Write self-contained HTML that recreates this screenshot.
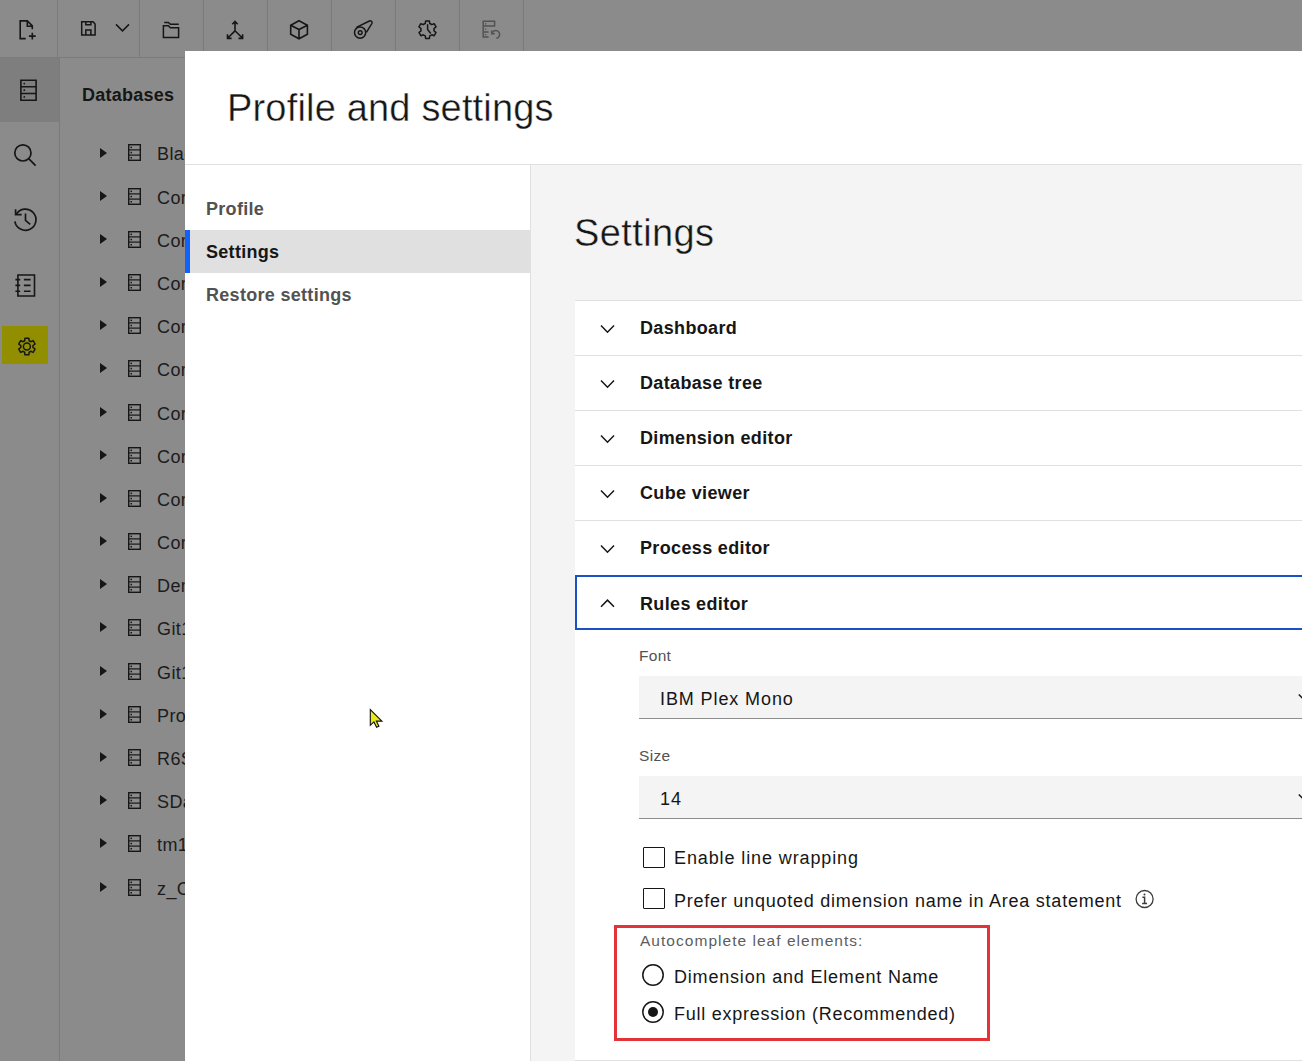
<!DOCTYPE html>
<html><head><meta charset="utf-8">
<style>
*{box-sizing:border-box;margin:0;padding:0}
html,body{width:1302px;height:1061px;overflow:hidden;background:#8b8b8b;font-family:"Liberation Sans",sans-serif;color:#161616}
.abs{position:absolute}
svg{position:absolute;display:block}
/* toolbar */
#toolbar{left:0;top:0;width:1302px;height:58px;background:#8b8b8b;border-bottom:1px solid #7b7b7b}
.tsep{top:0;width:1px;height:58px;background:#7b7b7b}
/* rail */
#rail{left:0;top:58px;width:60px;height:1003px;border-right:1px solid #7b7b7b}
#railsel{left:0;top:58px;width:59px;height:64px;background:#7e7e7e}
#hl{left:2px;top:326px;width:46px;height:38px;background:#918f00}
/* db panel */
#dbh{left:82px;top:84px;font-size:18px;font-weight:700;color:#161616;line-height:22px;letter-spacing:0.25px}
.row{left:0;width:185px;height:43px}
.tri{left:100px;width:0;height:0;border-top:5.2px solid transparent;border-bottom:5.2px solid transparent;border-left:7.4px solid #161616}
.rtx{left:157px;font-size:18px;line-height:20px;color:#1c1c1c;white-space:nowrap;letter-spacing:0.4px}
/* modal */
#modal{left:185px;top:51px;width:1117px;height:1010px;background:#fff;overflow:hidden}
#title{left:42px;top:35px;font-size:38px;line-height:44px;letter-spacing:0.18px;-webkit-text-stroke:0.4px #fff;white-space:nowrap;color:#161616}
#hdrline{left:0;top:113px;width:1117px;height:1px;background:#e0e0e0}
#nav{left:0;top:114px;width:346px;height:900px;border-right:1px solid #e0e0e0}
.nav{left:0;width:345px;height:43px;font-size:18px;font-weight:700;color:#525252;padding-left:21px;line-height:45px;letter-spacing:0.3px;white-space:nowrap}
#right{left:346px;top:114px;width:771px;height:900px;background:#f4f4f4}
#sh{left:43px;top:46px;font-size:38px;line-height:44px;letter-spacing:0.4px;-webkit-text-stroke:0.4px #f4f4f4;white-space:nowrap}
#acc{left:44px;top:135px;width:800px;height:800px}
.ai{left:0;width:800px;height:55px;border-top:1px solid #e0e0e0;background:#fff}
.at{left:65px;top:0;font-size:18px;font-weight:700;line-height:55px;letter-spacing:0.35px;white-space:nowrap;color:#161616}
.lbl{font-size:15.5px;line-height:18px;color:#525252;white-space:nowrap;letter-spacing:0.3px}
.lbl2{font-size:15.5px;line-height:18px;color:#5d5d5d;white-space:nowrap;letter-spacing:1.03px}
.sel{width:800px;height:43px;background:#f4f4f4;border-bottom:1px solid #8d8d8d;font-size:18px;line-height:46px;padding-left:21px;white-space:nowrap;letter-spacing:0.9px}
.cb{width:22px;height:21px;border:1.5px solid #161616;border-radius:1px;background:#fff}
.txt{font-size:18px;line-height:22px;white-space:nowrap;letter-spacing:0.65px;color:#161616}
</style></head>
<body>
<!-- TOOLBAR -->
<div id="toolbar" class="abs"></div>
<div class="abs tsep" style="left:57px"></div>
<div class="abs tsep" style="left:139px"></div>
<div class="abs tsep" style="left:203px"></div>
<div class="abs tsep" style="left:267px"></div>
<div class="abs tsep" style="left:331px"></div>
<div class="abs tsep" style="left:395px"></div>
<div class="abs tsep" style="left:459px"></div>
<div class="abs tsep" style="left:523px"></div>

<!-- RAIL -->
<div id="railsel" class="abs"></div>
<div id="rail" class="abs"></div>
<div id="hl" class="abs"></div>

<svg style="left:0;top:0" width="523" height="370" viewBox="0 0 523 370" fill="none" stroke="#161616" stroke-width="1.6" stroke-linejoin="miter">
<!-- new doc -->
<path d="M25.7 38.6H20.2V20.9H27.3L32.3 25.9V29.2M27.3 20.9V26.3H32.3"/>
<path d="M28.9 36.1H35.7M32.3 32.8V39.4"/>
<!-- save -->
<path d="M81.7 21.8H93L95.1 24.1V35H81.7Z M85.8 21.8V24.8H90.9V21.8 M85.8 35V29.9H90.9V35" stroke-width="1.5"/>
<path d="M116 24.4L122.5 30.9L129 24.4" stroke-width="1.5"/>
<!-- folder -->
<path d="M164.2 22.4H168.3L170.4 24.3H178.8" stroke-width="1.5"/>
<path d="M163.4 25.8H168.3L170.4 27.8H178.6V37.4H163.4Z" stroke-width="1.5"/>
<!-- axes -->
<path d="M235 21.6V30.8L227.6 38.2M235 30.8L242.6 38.2 M232.3 24.2L235 21.5L237.7 24.2 M227.5 34.2V38.4H231.6 M242.6 34.2V38.4H238.5" stroke-width="1.6"/>
<!-- cube -->
<path d="M299 20.7L307.4 25.2V34.2L299 38.8L290.7 34.2V25.2Z M290.7 25.2L299 29.5L307.4 25.2 M299 29.5V38.8" stroke-width="1.6"/>
<!-- process -->
<circle cx="360.1" cy="32.6" r="5.6" stroke-width="1.5"/>
<circle cx="360.2" cy="32.6" r="1.9" stroke-width="1.4"/>
<path d="M356.4 27.3L369.4 21A1.9 1.9 0 0 1 372 23.3L366.4 32.4" stroke-width="1.5"/>
<!-- gear clock -->
<path d="M424.20 23.98 L425.26 23.49 L425.63 20.90 L429.37 20.90 L429.74 23.49 L430.80 23.98 L431.76 24.66 L434.19 23.68 L436.06 26.92 L434.00 28.53 L434.10 29.70 L434.00 30.87 L436.06 32.48 L434.19 35.72 L431.76 34.74 L430.80 35.42 L429.74 35.91 L429.37 38.50 L425.63 38.50 L425.26 35.91 L424.20 35.42 L423.24 34.74 L420.81 35.72 L418.94 32.48 L421.00 30.87 L420.90 29.70 L421.00 28.53 L418.94 26.92 L420.81 23.68 L423.24 24.66Z" stroke-width="1.5" stroke-linejoin="round"/>
<path d="M427.6 24.2V29.6L430.8 33.4" stroke-width="1.5"/>
<!-- disabled restore -->
<g stroke="#525252" stroke-width="1.5">
<path d="M483.2 21.2H494.6V26.1H483.2Z M483.2 26.1V37.1H488.6 M483.2 31.9H488.6"/>
<path d="M492.3 32.6A3.9 3.9 0 1 1 496.4 38.3" />
<path d="M491.7 30.6V33.7H494.7"/>
</g>
<g fill="#525252" stroke="none"><rect x="485" y="23.2" width="1.3" height="1.3"/><rect x="485" y="28.5" width="1.3" height="1.3"/><rect x="485" y="34" width="1.3" height="1.3"/></g>
<!-- rail db -->
<path d="M20.9 80.2H36.1V100.3H20.9Z M20.9 86.8H36.1 M20.9 93.5H36.1" stroke-width="1.6"/>
<g fill="#161616" stroke="none"><circle cx="24.3" cy="83.6" r="0.9"/><circle cx="24.3" cy="90.2" r="0.9"/><circle cx="24.3" cy="96.9" r="0.9"/></g>
<!-- search -->
<circle cx="22.9" cy="152.9" r="8.1" stroke-width="1.7"/>
<path d="M28.7 158.7L35.6 165.6" stroke-width="1.7"/>
<!-- history -->
<path d="M16.2 214.4A10.6 10.6 0 1 1 14.9 221.3" stroke-width="1.7"/>
<path d="M15.6 209.2V214.6H21.7" stroke-width="1.7"/>
<path d="M25.5 213.5V220.4L30.2 224.3" stroke-width="1.7"/>
<!-- notebook -->
<path d="M17.9 275H34.5V296H17.9Z M23.9 279.6H30.6 M23.9 285.4H30.6 M23.9 291.3H30.6 M15.4 279.6H20.2 M15.4 285.4H20.2 M15.4 291.3H20.2" stroke-width="1.6"/>
<!-- gear -->
<path d="M23.85 341.22 L24.65 340.83 L24.94 338.13 L28.86 338.13 L29.15 340.83 L29.95 341.22 L30.69 341.72 L33.17 340.61 L35.13 344.01 L32.93 345.61 L33.00 346.50 L32.93 347.39 L35.13 348.99 L33.17 352.39 L30.69 351.28 L29.95 351.78 L29.15 352.17 L28.86 354.87 L24.94 354.87 L24.65 352.17 L23.85 351.78 L23.11 351.28 L20.63 352.39 L18.67 348.99 L20.87 347.39 L20.80 346.50 L20.87 345.61 L18.67 344.01 L20.63 340.61 L23.11 341.72Z" stroke-width="1.5" stroke-linejoin="round"/>
<circle cx="26.9" cy="346.5" r="3.5" stroke-width="1.5"/>
</svg>
<!-- DB PANEL -->
<div id="dbh" class="abs">Databases</div>
<div id="tree"><div class="abs tri" style="top:148px"></div><svg class="dbi" style="left:128px;top:144px" width="13" height="17" viewBox="0 0 13 17"><rect x="0.7" y="0.7" width="11.6" height="15.6" fill="none" stroke="#161616" stroke-width="1.4"/><line x1="0.5" y1="5.9" x2="12.5" y2="5.9" stroke="#161616" stroke-width="1.2"/><line x1="0.5" y1="11.1" x2="12.5" y2="11.1" stroke="#161616" stroke-width="1.2"/><rect x="2.5" y="2.6" width="1.5" height="1.5" fill="#161616"/><rect x="2.5" y="7.8" width="1.5" height="1.5" fill="#161616"/><rect x="2.5" y="13" width="1.5" height="1.5" fill="#161616"/></svg><div class="abs rtx" style="top:143.5px">BlackRock</div><div class="abs tri" style="top:191px"></div><svg class="dbi" style="left:128px;top:188px" width="13" height="17" viewBox="0 0 13 17"><rect x="0.7" y="0.7" width="11.6" height="15.6" fill="none" stroke="#161616" stroke-width="1.4"/><line x1="0.5" y1="5.9" x2="12.5" y2="5.9" stroke="#161616" stroke-width="1.2"/><line x1="0.5" y1="11.1" x2="12.5" y2="11.1" stroke="#161616" stroke-width="1.2"/><rect x="2.5" y="2.6" width="1.5" height="1.5" fill="#161616"/><rect x="2.5" y="7.8" width="1.5" height="1.5" fill="#161616"/><rect x="2.5" y="13" width="1.5" height="1.5" fill="#161616"/></svg><div class="abs rtx" style="top:187.5px">Corp_Sales</div><div class="abs tri" style="top:234px"></div><svg class="dbi" style="left:128px;top:231px" width="13" height="17" viewBox="0 0 13 17"><rect x="0.7" y="0.7" width="11.6" height="15.6" fill="none" stroke="#161616" stroke-width="1.4"/><line x1="0.5" y1="5.9" x2="12.5" y2="5.9" stroke="#161616" stroke-width="1.2"/><line x1="0.5" y1="11.1" x2="12.5" y2="11.1" stroke="#161616" stroke-width="1.2"/><rect x="2.5" y="2.6" width="1.5" height="1.5" fill="#161616"/><rect x="2.5" y="7.8" width="1.5" height="1.5" fill="#161616"/><rect x="2.5" y="13" width="1.5" height="1.5" fill="#161616"/></svg><div class="abs rtx" style="top:230.5px">Corporate_Fin</div><div class="abs tri" style="top:277px"></div><svg class="dbi" style="left:128px;top:274px" width="13" height="17" viewBox="0 0 13 17"><rect x="0.7" y="0.7" width="11.6" height="15.6" fill="none" stroke="#161616" stroke-width="1.4"/><line x1="0.5" y1="5.9" x2="12.5" y2="5.9" stroke="#161616" stroke-width="1.2"/><line x1="0.5" y1="11.1" x2="12.5" y2="11.1" stroke="#161616" stroke-width="1.2"/><rect x="2.5" y="2.6" width="1.5" height="1.5" fill="#161616"/><rect x="2.5" y="7.8" width="1.5" height="1.5" fill="#161616"/><rect x="2.5" y="13" width="1.5" height="1.5" fill="#161616"/></svg><div class="abs rtx" style="top:273.5px">Corp_HR</div><div class="abs tri" style="top:320px"></div><svg class="dbi" style="left:128px;top:317px" width="13" height="17" viewBox="0 0 13 17"><rect x="0.7" y="0.7" width="11.6" height="15.6" fill="none" stroke="#161616" stroke-width="1.4"/><line x1="0.5" y1="5.9" x2="12.5" y2="5.9" stroke="#161616" stroke-width="1.2"/><line x1="0.5" y1="11.1" x2="12.5" y2="11.1" stroke="#161616" stroke-width="1.2"/><rect x="2.5" y="2.6" width="1.5" height="1.5" fill="#161616"/><rect x="2.5" y="7.8" width="1.5" height="1.5" fill="#161616"/><rect x="2.5" y="13" width="1.5" height="1.5" fill="#161616"/></svg><div class="abs rtx" style="top:316.5px">Corp_Sales</div><div class="abs tri" style="top:363px"></div><svg class="dbi" style="left:128px;top:360px" width="13" height="17" viewBox="0 0 13 17"><rect x="0.7" y="0.7" width="11.6" height="15.6" fill="none" stroke="#161616" stroke-width="1.4"/><line x1="0.5" y1="5.9" x2="12.5" y2="5.9" stroke="#161616" stroke-width="1.2"/><line x1="0.5" y1="11.1" x2="12.5" y2="11.1" stroke="#161616" stroke-width="1.2"/><rect x="2.5" y="2.6" width="1.5" height="1.5" fill="#161616"/><rect x="2.5" y="7.8" width="1.5" height="1.5" fill="#161616"/><rect x="2.5" y="13" width="1.5" height="1.5" fill="#161616"/></svg><div class="abs rtx" style="top:359.5px">Corp_HR</div><div class="abs tri" style="top:407px"></div><svg class="dbi" style="left:128px;top:404px" width="13" height="17" viewBox="0 0 13 17"><rect x="0.7" y="0.7" width="11.6" height="15.6" fill="none" stroke="#161616" stroke-width="1.4"/><line x1="0.5" y1="5.9" x2="12.5" y2="5.9" stroke="#161616" stroke-width="1.2"/><line x1="0.5" y1="11.1" x2="12.5" y2="11.1" stroke="#161616" stroke-width="1.2"/><rect x="2.5" y="2.6" width="1.5" height="1.5" fill="#161616"/><rect x="2.5" y="7.8" width="1.5" height="1.5" fill="#161616"/><rect x="2.5" y="13" width="1.5" height="1.5" fill="#161616"/></svg><div class="abs rtx" style="top:403.5px">Corp_IT</div><div class="abs tri" style="top:450px"></div><svg class="dbi" style="left:128px;top:447px" width="13" height="17" viewBox="0 0 13 17"><rect x="0.7" y="0.7" width="11.6" height="15.6" fill="none" stroke="#161616" stroke-width="1.4"/><line x1="0.5" y1="5.9" x2="12.5" y2="5.9" stroke="#161616" stroke-width="1.2"/><line x1="0.5" y1="11.1" x2="12.5" y2="11.1" stroke="#161616" stroke-width="1.2"/><rect x="2.5" y="2.6" width="1.5" height="1.5" fill="#161616"/><rect x="2.5" y="7.8" width="1.5" height="1.5" fill="#161616"/><rect x="2.5" y="13" width="1.5" height="1.5" fill="#161616"/></svg><div class="abs rtx" style="top:446.5px">Corp_Ops</div><div class="abs tri" style="top:493px"></div><svg class="dbi" style="left:128px;top:490px" width="13" height="17" viewBox="0 0 13 17"><rect x="0.7" y="0.7" width="11.6" height="15.6" fill="none" stroke="#161616" stroke-width="1.4"/><line x1="0.5" y1="5.9" x2="12.5" y2="5.9" stroke="#161616" stroke-width="1.2"/><line x1="0.5" y1="11.1" x2="12.5" y2="11.1" stroke="#161616" stroke-width="1.2"/><rect x="2.5" y="2.6" width="1.5" height="1.5" fill="#161616"/><rect x="2.5" y="7.8" width="1.5" height="1.5" fill="#161616"/><rect x="2.5" y="13" width="1.5" height="1.5" fill="#161616"/></svg><div class="abs rtx" style="top:489.5px">Corp_Risk</div><div class="abs tri" style="top:536px"></div><svg class="dbi" style="left:128px;top:533px" width="13" height="17" viewBox="0 0 13 17"><rect x="0.7" y="0.7" width="11.6" height="15.6" fill="none" stroke="#161616" stroke-width="1.4"/><line x1="0.5" y1="5.9" x2="12.5" y2="5.9" stroke="#161616" stroke-width="1.2"/><line x1="0.5" y1="11.1" x2="12.5" y2="11.1" stroke="#161616" stroke-width="1.2"/><rect x="2.5" y="2.6" width="1.5" height="1.5" fill="#161616"/><rect x="2.5" y="7.8" width="1.5" height="1.5" fill="#161616"/><rect x="2.5" y="13" width="1.5" height="1.5" fill="#161616"/></svg><div class="abs rtx" style="top:532.5px">Corp_Tax</div><div class="abs tri" style="top:579px"></div><svg class="dbi" style="left:128px;top:576px" width="13" height="17" viewBox="0 0 13 17"><rect x="0.7" y="0.7" width="11.6" height="15.6" fill="none" stroke="#161616" stroke-width="1.4"/><line x1="0.5" y1="5.9" x2="12.5" y2="5.9" stroke="#161616" stroke-width="1.2"/><line x1="0.5" y1="11.1" x2="12.5" y2="11.1" stroke="#161616" stroke-width="1.2"/><rect x="2.5" y="2.6" width="1.5" height="1.5" fill="#161616"/><rect x="2.5" y="7.8" width="1.5" height="1.5" fill="#161616"/><rect x="2.5" y="13" width="1.5" height="1.5" fill="#161616"/></svg><div class="abs rtx" style="top:575.5px">Demo</div><div class="abs tri" style="top:622px"></div><svg class="dbi" style="left:128px;top:619px" width="13" height="17" viewBox="0 0 13 17"><rect x="0.7" y="0.7" width="11.6" height="15.6" fill="none" stroke="#161616" stroke-width="1.4"/><line x1="0.5" y1="5.9" x2="12.5" y2="5.9" stroke="#161616" stroke-width="1.2"/><line x1="0.5" y1="11.1" x2="12.5" y2="11.1" stroke="#161616" stroke-width="1.2"/><rect x="2.5" y="2.6" width="1.5" height="1.5" fill="#161616"/><rect x="2.5" y="7.8" width="1.5" height="1.5" fill="#161616"/><rect x="2.5" y="13" width="1.5" height="1.5" fill="#161616"/></svg><div class="abs rtx" style="top:618.5px">Git1</div><div class="abs tri" style="top:666px"></div><svg class="dbi" style="left:128px;top:663px" width="13" height="17" viewBox="0 0 13 17"><rect x="0.7" y="0.7" width="11.6" height="15.6" fill="none" stroke="#161616" stroke-width="1.4"/><line x1="0.5" y1="5.9" x2="12.5" y2="5.9" stroke="#161616" stroke-width="1.2"/><line x1="0.5" y1="11.1" x2="12.5" y2="11.1" stroke="#161616" stroke-width="1.2"/><rect x="2.5" y="2.6" width="1.5" height="1.5" fill="#161616"/><rect x="2.5" y="7.8" width="1.5" height="1.5" fill="#161616"/><rect x="2.5" y="13" width="1.5" height="1.5" fill="#161616"/></svg><div class="abs rtx" style="top:662.5px">Git1_Test</div><div class="abs tri" style="top:709px"></div><svg class="dbi" style="left:128px;top:706px" width="13" height="17" viewBox="0 0 13 17"><rect x="0.7" y="0.7" width="11.6" height="15.6" fill="none" stroke="#161616" stroke-width="1.4"/><line x1="0.5" y1="5.9" x2="12.5" y2="5.9" stroke="#161616" stroke-width="1.2"/><line x1="0.5" y1="11.1" x2="12.5" y2="11.1" stroke="#161616" stroke-width="1.2"/><rect x="2.5" y="2.6" width="1.5" height="1.5" fill="#161616"/><rect x="2.5" y="7.8" width="1.5" height="1.5" fill="#161616"/><rect x="2.5" y="13" width="1.5" height="1.5" fill="#161616"/></svg><div class="abs rtx" style="top:705.5px">Products</div><div class="abs tri" style="top:752px"></div><svg class="dbi" style="left:128px;top:749px" width="13" height="17" viewBox="0 0 13 17"><rect x="0.7" y="0.7" width="11.6" height="15.6" fill="none" stroke="#161616" stroke-width="1.4"/><line x1="0.5" y1="5.9" x2="12.5" y2="5.9" stroke="#161616" stroke-width="1.2"/><line x1="0.5" y1="11.1" x2="12.5" y2="11.1" stroke="#161616" stroke-width="1.2"/><rect x="2.5" y="2.6" width="1.5" height="1.5" fill="#161616"/><rect x="2.5" y="7.8" width="1.5" height="1.5" fill="#161616"/><rect x="2.5" y="13" width="1.5" height="1.5" fill="#161616"/></svg><div class="abs rtx" style="top:748.5px">R6S</div><div class="abs tri" style="top:795px"></div><svg class="dbi" style="left:128px;top:792px" width="13" height="17" viewBox="0 0 13 17"><rect x="0.7" y="0.7" width="11.6" height="15.6" fill="none" stroke="#161616" stroke-width="1.4"/><line x1="0.5" y1="5.9" x2="12.5" y2="5.9" stroke="#161616" stroke-width="1.2"/><line x1="0.5" y1="11.1" x2="12.5" y2="11.1" stroke="#161616" stroke-width="1.2"/><rect x="2.5" y="2.6" width="1.5" height="1.5" fill="#161616"/><rect x="2.5" y="7.8" width="1.5" height="1.5" fill="#161616"/><rect x="2.5" y="13" width="1.5" height="1.5" fill="#161616"/></svg><div class="abs rtx" style="top:791.5px">SData</div><div class="abs tri" style="top:838px"></div><svg class="dbi" style="left:128px;top:835px" width="13" height="17" viewBox="0 0 13 17"><rect x="0.7" y="0.7" width="11.6" height="15.6" fill="none" stroke="#161616" stroke-width="1.4"/><line x1="0.5" y1="5.9" x2="12.5" y2="5.9" stroke="#161616" stroke-width="1.2"/><line x1="0.5" y1="11.1" x2="12.5" y2="11.1" stroke="#161616" stroke-width="1.2"/><rect x="2.5" y="2.6" width="1.5" height="1.5" fill="#161616"/><rect x="2.5" y="7.8" width="1.5" height="1.5" fill="#161616"/><rect x="2.5" y="13" width="1.5" height="1.5" fill="#161616"/></svg><div class="abs rtx" style="top:834.5px">tm1_sample</div><div class="abs tri" style="top:882px"></div><svg class="dbi" style="left:128px;top:879px" width="13" height="17" viewBox="0 0 13 17"><rect x="0.7" y="0.7" width="11.6" height="15.6" fill="none" stroke="#161616" stroke-width="1.4"/><line x1="0.5" y1="5.9" x2="12.5" y2="5.9" stroke="#161616" stroke-width="1.2"/><line x1="0.5" y1="11.1" x2="12.5" y2="11.1" stroke="#161616" stroke-width="1.2"/><rect x="2.5" y="2.6" width="1.5" height="1.5" fill="#161616"/><rect x="2.5" y="7.8" width="1.5" height="1.5" fill="#161616"/><rect x="2.5" y="13" width="1.5" height="1.5" fill="#161616"/></svg><div class="abs rtx" style="top:878.5px">z_Conso</div></div>

<!-- MODAL -->
<div id="modal" class="abs">
  <div id="title" class="abs">Profile and settings</div>
  <div id="hdrline" class="abs"></div>
  <div id="nav" class="abs">
    <div class="abs nav" style="top:22px">Profile</div>
    <div class="abs nav" style="top:65px;background:#e0e0e0;color:#161616;border-left:5px solid #0f62fe;padding-left:16px">Settings</div>
    <div class="abs nav" style="top:108px">Restore settings</div>
  </div>
  <div id="right" class="abs">
    <div id="sh" class="abs">Settings</div>
    <div id="acc" class="abs">
      <div class="abs ai" style="top:0"><svg style="left:24.5px;top:22.5px" width="15" height="11" viewBox="0 0 15 11"><path d="M1 1.5L7.5 8.2L14 1.5" fill="none" stroke="#161616" stroke-width="1.5"/></svg><div class="abs at">Dashboard</div></div>
      <div class="abs ai" style="top:55px"><svg style="left:24.5px;top:22.5px" width="15" height="11" viewBox="0 0 15 11"><path d="M1 1.5L7.5 8.2L14 1.5" fill="none" stroke="#161616" stroke-width="1.5"/></svg><div class="abs at">Database tree</div></div>
      <div class="abs ai" style="top:110px"><svg style="left:24.5px;top:22.5px" width="15" height="11" viewBox="0 0 15 11"><path d="M1 1.5L7.5 8.2L14 1.5" fill="none" stroke="#161616" stroke-width="1.5"/></svg><div class="abs at">Dimension editor</div></div>
      <div class="abs ai" style="top:165px"><svg style="left:24.5px;top:22.5px" width="15" height="11" viewBox="0 0 15 11"><path d="M1 1.5L7.5 8.2L14 1.5" fill="none" stroke="#161616" stroke-width="1.5"/></svg><div class="abs at">Cube viewer</div></div>
      <div class="abs ai" style="top:220px"><svg style="left:24.5px;top:22.5px" width="15" height="11" viewBox="0 0 15 11"><path d="M1 1.5L7.5 8.2L14 1.5" fill="none" stroke="#161616" stroke-width="1.5"/></svg><div class="abs at">Process editor</div></div>
      <div class="abs ai" style="top:275px;border:2px solid #1a52c4;height:55px"><svg style="left:22.5px;top:20.5px" width="15" height="11" viewBox="0 0 15 11"><path d="M1 8.7L7.5 2.1L14 8.7" fill="none" stroke="#161616" stroke-width="1.5"/></svg><div class="abs at" style="left:63px;top:-0.5px">Rules editor</div></div>
      <div class="abs" id="content" style="left:0;top:330px;width:800px;height:431px;background:#fff;border-bottom:1px solid #e0e0e0">
        <div class="abs lbl" style="left:64px;top:17px">Font</div>
        <div class="abs sel" style="left:64px;top:46px">IBM Plex Mono<svg style="left:659px;top:17px" width="14" height="10" viewBox="0 0 14 10"><path d="M0.8 1.5L7 7.7L13.2 1.5" fill="none" stroke="#161616" stroke-width="1.5"/></svg></div>
        <div class="abs lbl" style="left:64px;top:117px">Size</div>
        <div class="abs sel" style="left:64px;top:146px">14<svg style="left:659px;top:17px" width="14" height="10" viewBox="0 0 14 10"><path d="M0.8 1.5L7 7.7L13.2 1.5" fill="none" stroke="#161616" stroke-width="1.5"/></svg></div>
        <div class="abs cb" style="left:68px;top:217px"></div>
        <div class="abs txt" style="left:99px;top:217px;letter-spacing:0.89px">Enable line wrapping</div>
        <div class="abs cb" style="left:68px;top:258px"></div>
        <div class="abs txt" style="left:99px;top:259.5px;letter-spacing:0.76px">Prefer unquoted dimension name in Area statement</div>
        <svg style="left:560px;top:258.5px" width="20" height="20" viewBox="0 0 20 20"><circle cx="9.6" cy="10" r="8.5" fill="none" stroke="#3d3d3d" stroke-width="1.3"/><path d="M7.4 8.3H9.6V14.3 M7.1 14.6H12.1" fill="none" stroke="#3d3d3d" stroke-width="1.5"/><circle cx="9.5" cy="5.6" r="1" fill="#3d3d3d"/></svg>
        <div class="abs" style="left:39px;top:295px;width:376px;height:116px;border:3px solid #e43338"></div>
        <div class="abs lbl2" style="left:65px;top:302px">Autocomplete leaf elements:</div>
        <svg style="left:66px;top:333px" width="24" height="24" viewBox="0 0 24 24"><circle cx="12" cy="12" r="10.2" fill="none" stroke="#161616" stroke-width="1.5"/></svg>
        <div class="abs txt" style="left:99px;top:336px;letter-spacing:0.81px">Dimension and Element Name</div>
        <svg style="left:66px;top:370px" width="24" height="24" viewBox="0 0 24 24"><circle cx="12" cy="12" r="10.2" fill="none" stroke="#161616" stroke-width="1.5"/><circle cx="12" cy="12" r="5" fill="#161616"/></svg>
        <div class="abs txt" style="left:99px;top:373px;letter-spacing:0.75px">Full expression (Recommended)</div>
      </div>
    </div>
  </div>
</div>
<svg style="left:365px;top:705px" width="24" height="26" viewBox="365 705 24 26"><path d="M370.3 709.6V725.3L373.9 721.9L376.6 727.2L378.9 726.2L376.4 721.1H381.9Z" fill="#e6e81a" stroke="#111" stroke-width="1.1" stroke-linejoin="miter"/></svg>
</body></html>
